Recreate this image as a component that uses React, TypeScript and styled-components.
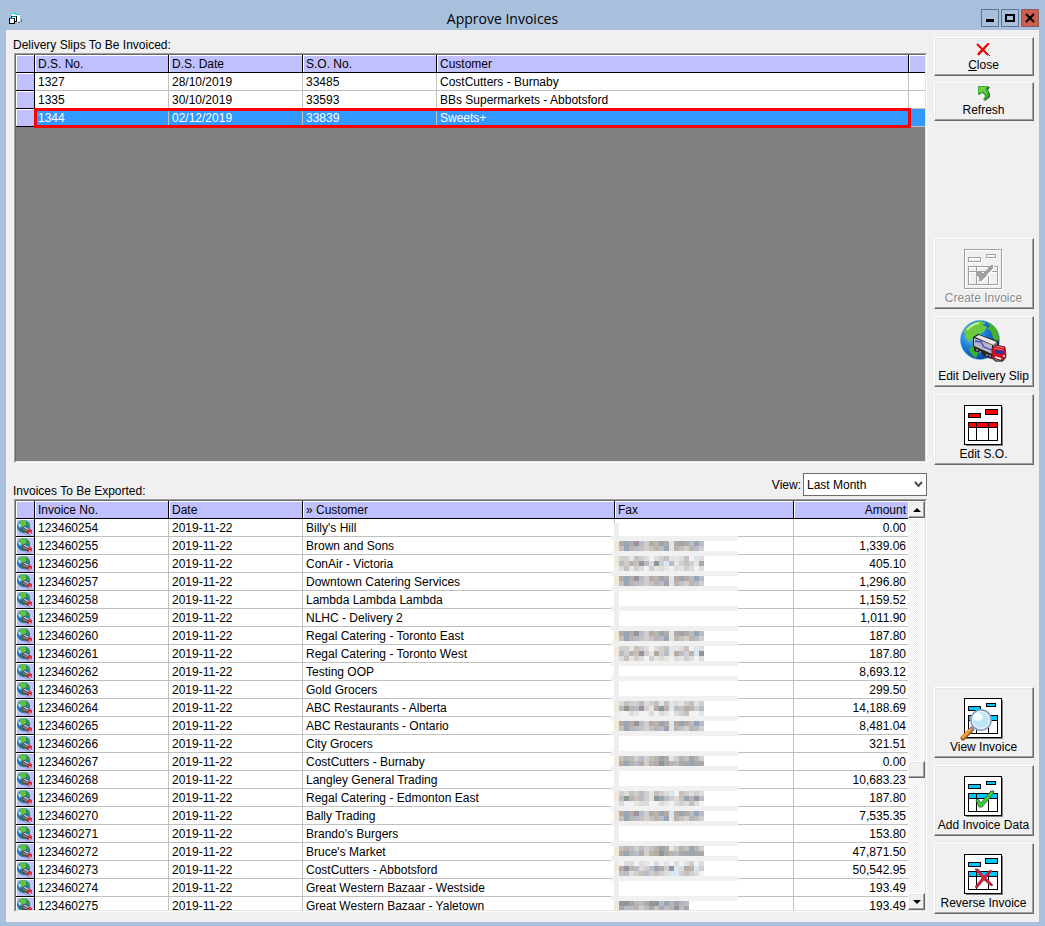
import React from 'react';
import styled, { createGlobalStyle, css } from 'styled-components';

const GlobalStyle = createGlobalStyle`
  *, *::before, *::after { box-sizing: border-box; }
  body {
    margin: 0;
    background: #a8c0dc;
    color: #000;
    font-family: "Liberation Sans", Arial, sans-serif;
    font-size: 12px;
  }
  button, select { font: inherit; color: inherit; }
`;

const Window = styled.div`
  display: flex;
  flex-direction: column;
  min-height: 100vh;
  padding: 0 6px 4px;
`;

const TitleBar = styled.header`
  display: flex;
  align-items: center;
  height: 30px;
  padding: 6px 0 0 2px;
`;

const Title = styled.h1`
  flex: 1;
  margin: 0;
  padding-top: 2px;
  font-family: "Open Sans", "Noto Sans", sans-serif;
  font-size: 14px;
  font-weight: 400;
  line-height: 20px;
  text-align: center;
`;

const WindowControls = styled.div`
  display: flex;
  gap: 2px;
`;

const ControlButton = styled.button<{ $danger?: boolean }>`
  display: flex;
  align-items: center;
  justify-content: center;
  width: 18px;
  height: 18px;
  padding: 0;
  border: 1px solid ${(p) => (p.$danger ? '#8a5a5c' : '#5f738c')};
  background: ${(p) => (p.$danger ? '#cd604c' : '#a8c0dc')};
`;

const Client = styled.div`
  display: flex;
  flex: 1;
  gap: 7px;
  padding: 0 5px 0 7px;
  background: #f0f0f0;
`;

const Main = styled.main`
  display: flex;
  flex: 1;
  flex-direction: column;
  min-width: 0;
  padding-bottom: 10px;
`;

const SectionBar = styled.div<{ $tall?: boolean }>`
  display: flex;
  align-items: flex-end;
  justify-content: space-between;
  height: ${(p) => (p.$tall ? 36 : 23)}px;
  ${(p) => p.$tall && css`padding-bottom: 3px;`}
`;

const SectionTitle = styled.h2<{ $low?: boolean }>`
  margin: 0;
  font-size: 12px;
  font-weight: 400;
  line-height: 16px;
  ${(p) => p.$low && css`margin-bottom: -3px;`}
`;

const ViewField = styled.label`
  display: flex;
  align-items: center;
  gap: 2px;
`;

const SelectWrap = styled.span`
  position: relative;
  display: block;

  svg {
    position: absolute;
    top: 8px;
    right: 4px;
    pointer-events: none;
  }
`;

const ViewSelect = styled.select`
  display: block;
  width: 124px;
  height: 23px;
  padding: 0 16px 0 3px;
  border: 1px solid #6d6d6d;
  border-radius: 0;
  background: #fff;
  appearance: none;
`;

const GridFrame = styled.div<{ $share: number; $fill: string }>`
  position: relative;
  display: flex;
  flex: ${(p) => p.$share} 1 0;
  min-height: 200px;
  margin-left: 1px;
  overflow: hidden;
  border: 1px solid;
  border-color: #a0a0a0 #fff #fff #a0a0a0;
  background: ${(p) => p.$fill};

  &::after {
    content: '';
    position: absolute;
    inset: 0;
    border: 1px solid;
    border-color: #696969 #e3e3e3 #e3e3e3 #696969;
    pointer-events: none;
  }
`;

const GridView = styled.div`
  position: relative;
  flex: 1 1 0;
  min-width: 0;
  height: 0;
  min-height: 100%;
  margin: 1px 0 0 1px;
  overflow: hidden;
`;

const Grid = styled.table`
  width: 100%;
  border-spacing: 0;
  border-collapse: separate;
  table-layout: fixed;
`;

const Col = styled.col<{ $w?: number }>`
  ${(p) => p.$w && css`width: ${p.$w}px;`}
`;

const HeadCell = styled.th<{ $right?: boolean; $last?: boolean }>`
  height: 18px;
  padding: 0 2px 0 3px;
  border-right: ${(p) => (p.$last ? 0 : 1)}px solid #000;
  border-bottom: 1px solid #000;
  background: #c0c0ff;
  box-shadow: inset 1px 1px #fff;
  font-weight: 400;
  line-height: 16px;
  text-align: ${(p) => (p.$right ? 'right' : 'left')};
  white-space: nowrap;
`;

const Cell = styled.td<{ $right?: boolean; $last?: boolean }>`
  height: 18px;
  padding: 0 ${(p) => (p.$right ? 2 : 3)}px 0 3px;
  border-right: ${(p) => (p.$last ? 0 : 1)}px solid #c0c0c0;
  border-bottom: 1px solid #c0c0c0;
  line-height: 16px;
  text-align: ${(p) => (p.$right ? 'right' : 'left')};
  white-space: nowrap;
`;

const RowHead = styled.td`
  height: 18px;
  padding: 0;
  border-right: 1px solid #000;
  border-bottom: 1px solid #000;
  background: #c0c0ff;
  box-shadow: inset 1px 1px #fff;
  line-height: 0;
`;

const Row = styled.tr<{ $selected?: boolean }>`
  background: ${(p) => (p.$selected ? '#3399ff' : '#fff')};
  color: ${(p) => (p.$selected ? '#fff' : '#000')};
`;

const Highlight = styled.div`
  position: absolute;
  top: 53px;
  left: 18px;
  right: 15px;
  height: 20px;
  border: 3px solid #f80000;
  pointer-events: none;
`;

const Marker = styled.small`
  font-size: 12px;
`;

const Censor = styled.svg`
  position: absolute;
  top: 20px;
  right: 170px;
`;

const ScrollBar = styled.div`
  display: flex;
  flex-direction: column;
  width: 17px;
  margin: 1px 1px 1px 0;
  background: repeating-conic-gradient(#fff 0 25%, #ececec 0 50%) 0 0 / 2px 2px;
`;

const raised = css`
  border: 1px solid;
  border-color: #fff #696969 #696969 #fff;
  background: #f0f0f0;
  box-shadow: inset -1px -1px #a0a0a0, inset 1px 1px #e8e8e8;
`;

const ScrollPiece = styled.button`
  ${raised}
  display: flex;
  align-items: center;
  justify-content: center;
  width: 17px;
  height: 17px;
  padding: 0;
`;

const Space = styled.div<{ $grow: number }>`
  flex: ${(p) => p.$grow} 1 0;
`;

const Sidebar = styled.nav`
  display: flex;
  flex-direction: column;
  gap: 7px;
  width: 100px;
  padding: 7px 0 8px;
`;

const ToolButton = styled.button<{ $small?: boolean }>`
  ${raised}
  display: flex;
  flex-direction: column;
  align-items: center;
  justify-content: space-between;
  flex: none;
  width: 100%;
  height: ${(p) => (p.$small ? 39 : 71)}px;
  padding: ${(p) => (p.$small ? '4px 1px 2px 0' : '2px 1px 2px 0')};
  ${(p) => p.$small && css`margin-bottom: -1px;`}
  line-height: 16px;
  white-space: nowrap;

  &:disabled {
    color: #8a8a8a;
    text-shadow: 1px 1px #fff;
  }
`;

const IconBox = styled.span<{ $small?: boolean }>`
  display: flex;
  align-items: flex-end;
  justify-content: center;
  height: ${(p) => (p.$small ? 14 : 51)}px;
`;

const Filler = styled.div<{ $h?: number }>`
  ${(p) => (p.$h ? css`flex: 0 0 ${p.$h}px;` : css`flex: 1;`)}
`;

function DocShapes({ fill, line, wide }: { fill: string; line: string; wide?: boolean }) {
  return (
    <g fill={fill} stroke={line} shapeRendering="crispEdges">
      <rect x=".5" y=".5" width="37" height="39" fill={line === '#000' ? '#fff' : 'none'} />
      {wide ? <rect x="21.5" y="4.5" width="12" height="5" /> : <rect x="22.5" y="5.5" width="9" height="3" />}
      <rect x="4.5" y="8.5" width="12" height="4" />
      <rect x="4.5" y="17.5" width="29" height="18" fill={line === '#000' ? '#fff' : 'none'} />
      <rect x="4.5" y="17.5" width="29" height="5" />
      <path d="M12.5 17v18M24.5 17v18" fill="none" />
    </g>
  );
}

function DocIcon({ kind }: { kind: 'create' | 'so' | 'view' | 'add' | 'reverse' }) {
  if (kind === 'create') {
    return (
      <svg width="40" height="41" viewBox="0 0 40 41">
        <g transform="translate(1 1)"><DocShapes fill="none" line="#fff" /></g>
        <DocShapes fill="none" line="#a0a0a0" />
        <path d="M12 22h5l2 3 8-9h2v3L18 32h-3v-3l-3-3z" fill="#fff" transform="translate(1 1)" />
        <path d="M12 22h5l2 3 8-9h2v3L18 32h-3v-3l-3-3z" fill="#a0a0a0" shapeRendering="crispEdges" />
      </svg>
    );
  }
  return (
    <svg width="40" height="41" viewBox="0 0 40 41" overflow="visible">
      <path d="M2 40.5h36.500V2" fill="none" stroke="#808080" shapeRendering="crispEdges" />
      <DocShapes fill={kind === 'so' ? '#f00' : '#00c8ff'} line="#000" wide={kind === 'so' || kind === 'reverse'} />
      {kind === 'view' && (
        <g>
          <path d="M-1 40l9-9" stroke="#a05a1c" strokeWidth="5" strokeLinecap="round" />
          <path d="M-1 39l8-8" stroke="#f2a044" strokeWidth="3" strokeLinecap="round" />
          <path d="M7 32l3-3" stroke="#888fa8" strokeWidth="3" />
          <circle cx="17" cy="22" r="10" fill="#bfe4f8" stroke="#8ba2c4" strokeWidth="2" />
          <circle cx="17" cy="22" r="8.5" fill="none" stroke="#e8f5fc" strokeWidth="1.5" />
          <ellipse cx="14" cy="19" rx="5" ry="4" fill="#f2fbff" />
        </g>
      )}
      {kind === 'add' && (
        <path d="M12 24l2-1 3 4L27 15h3l-1 3-11 13h-3z" fill="#38d038" stroke="#3c7040" />
      )}
      {kind === 'reverse' && (
        <path d="M11 15l3 0 6 7 6-6 2 1-6 7 7 7-2 1-7-6-7 8-2-1 7-9z" fill="#d0203c" stroke="#8c3048" strokeWidth=".7" />
      )}
    </svg>
  );
}

const TruckIcon = () => (
  <svg width="47" height="48" viewBox="0 0 47 48">
    <defs>
      <radialGradient id="ocean" cx=".3" cy=".35" r=".75">
        <stop offset="0" stopColor="#6cc8f8" />
        <stop offset=".45" stopColor="#1c80dc" />
        <stop offset="1" stopColor="#043c90" />
      </radialGradient>
    </defs>
    <circle cx="20" cy="20" r="19.5" fill="url(#ocean)" stroke="#60b0e8" strokeWidth=".6" />
    <path d="M4 11Q10 3 20 1l6 2-4 2 5 2-3 5-5 2-2 4-5 0-2 5-3-4-2-2 1-4-3-1z" fill="#6cc83c" />
    <path d="M27 2q8 3 11 10l1 8-3 2-3-4-2-7-4-2 3-3z" fill="#48b028" />
    <path d="M11 26l5-1 4 4-2 5-2 4-4-3-3-5z" fill="#38b034" />
    <path d="M7 10q5-6 12-7" stroke="#c0f090" strokeWidth="2" fill="none" />
    <path d="M13 17l5-3 20 7 1 5-6 9-3 1-17-9z" fill="#202028" />
    <path d="M15 17l4-2 18 7-4 3z" fill="#e4e4e4" />
    <path d="M14 18l18 7v9l-18-8z" fill="#b8b8bc" />
    <path d="M33 25l4-3v5l-4 6z" fill="#8c8c94" />
    <path d="M15 21l6 1 3 5 8 3" fill="none" stroke="#3c3cf0" strokeWidth="1.300" />
    <path d="M14 27l18 8v4l-4-1-2-2h-2l-3-3-7-2z" fill="#282830" />
    <path d="M17 29v2M20 31v2M27 34v2M30 35v2" stroke="#d0d0d0" strokeWidth="1" />
    <path d="M32 28l4-3 9 2 1 9-3 5-11-3z" fill="#d01424" stroke="#401018" strokeWidth=".8" />
    <path d="M34 28l9 2M36 26l8 2" stroke="#f87070" strokeWidth="1" />
    <path d="M35 30l9 1v3l-9-1z" fill="#2434b0" />
    <path d="M35 37l6 2M44 35v2" stroke="#fff" strokeWidth="1.500" />
    <path d="M32 38l4 3h6l4-4" stroke="#404040" strokeWidth="1.500" fill="none" />
  </svg>
);

const RowIcon = () => (
  <svg width="17" height="17" viewBox="0 0 17 17">
    <circle cx="7.500" cy="7.500" r="6.500" fill="#1c70c0" />
    <path d="M4 2q3-2 6 0l1 3-3 3-2 1-3-2z" fill="#60c048" />
    <path d="M10 2q3 1 4 5l-2 2-2-4z" fill="#309838" />
    <path d="M2 4q0 3 2 5l1-3z" fill="#b0e4f8" />
    <path d="M3 10l2 3 3 1-1-3z" fill="#208850" />
    <path d="M6 8l2-1 6 3v3l-2 2-6-3z" fill="#505058" />
    <path d="M7 8h2l4 2-1 1z" fill="#d4d4d8" />
    <path d="M7 10l4 2" stroke="#a0a0b0" />
    <path d="M12 11l2-1 2 1v3l-2 1-2-1z" fill="#d83040" />
    <path d="M13 14h2" stroke="#f0c0c0" />
    <path d="M7 14l4 2h4" stroke="#9098c0" fill="none" />
  </svg>
);

const AppIcon = () => (
  <svg width="16" height="14" viewBox="0 0 16 14" shapeRendering="crispEdges">
    <path d="M4 3h5v1h3v6l-3 1H6z" fill="#fff" />
    <path d="M4 2.500h4M7 3.500h5" stroke="#00e0e0" />
    <path d="M13.500 8v3M10 11.500h2" stroke="#707070" />
    <path d="M3.500 5.500h5v5h-5z" fill="#fff" stroke="#000" />
    <path d="M1.500 7.500h5v5h-5z" fill="#fff" stroke="#000" />
    <path d="M2 7.500h4M4 5.500h4" stroke="#008888" />
  </svg>
);

const CloseIcon = () => (
  <svg width="15" height="13" viewBox="0 0 15 13">
    <path d="M2 2l12 11M12 2L3 12" stroke="#501010" strokeWidth="1" fill="none" />
    <path d="M1 1l11 11" stroke="#f80000" strokeWidth="2" fill="none" />
    <path d="M13 0L3 10l-1 2" stroke="#f80000" strokeWidth="2" fill="none" />
  </svg>
);

const RefreshIcon = () => (
  <svg width="12" height="15" viewBox="0 0 12 15">
    <path d="M1 1h11L10 4l2 4v3l-5 4-1-1 2-3-2-3-2-1-3 2z" fill="#2c5830" />
    <path d="M0 0h11L9 3l2 5v2l-4 4H5l2-4-2-3H3L0 9z" fill="#3cac38" />
    <path d="M1 1h8L7 3l2 4-1 1-3-3-4 2z" fill="#70d048" />
  </svg>
);

const PALETTE: Record<string, string> = {
  a: '#b5aaa4', b: '#97a6b2', c: '#b9b4ad', d: '#9a929c', e: '#b9bcc6', f: '#cfcfd0',
  g: '#dbe7f0', h: '#c8c0bc', i: '#dcdcdc', j: '#8e9696', k: '#e8e4de', l: '#f2f2f4', n: '#a8a8a8',
};
const ORDINARY = ['abadefacbagabaebe', 'hbcehfhcebkchfcef'];
const LATER = ['hcefefhcbakfchbcf', 'abceafcajncennbnn'];
const TALL = ['ffkhfilifhgkihlgi', 'efchdfkafekaefcgj', 'ihkfilfkikligfili'];
const FAXES: [number, string[]][] = [
  [1, ORDINARY], [2, ['ffkhfilifhgkihlgi', 'efchdeijfgekfhfkn', 'ihkfilfkikligfili']], [3, ORDINARY],
  [6, ORDINARY], [7, TALL], [10, ['ihffeifhghgikfhgf', 'ejcedfkajcgehacfe', 'lliklliliklifhllg']], [11, ORDINARY], [13, LATER],
  [15, ['fihfefkhfiglhfifi', 'ejchefkjbefihbcde', 'illkiilliklifihil']], [16, ORDINARY], [18, LATER],
  [19, ['liiliklilglilgfli', 'adceifebafdgiacgf', 'heifhefhfiggfhfil']], [21, ['djbceadjebcbce', 'neecfenhnecden']],
];
/* The mosaic snaps to five-pixel blocks measured from its own top edge. */
const stripTop = (line: number) => Math.floor((15 + 18 * line) / 5) * 5;

const FaxMosaic = () => (
  <Censor width="127" height="395" shapeRendering="crispEdges" aria-hidden="true">
    {Array.from({ length: 22 }, (_, i) => (
      <rect key={i} x="0" y={stripTop(i)} width="127" height="5" fill="#f1f1f1" />
    ))}
    {/* White patches hide the row rules that the strips leave uncovered. */}
    <rect x="3" y="2" width="5" height="393" fill="#eeeeee" />
    {FAXES.map(([row, lines]) => {
      const top = stripTop(row - 1) + 5;
      return (
        <g key={row}>
          <rect x="3" y={top} width="5" height="10" fill="#efe9dc" />
          {lines.flatMap((line, r) =>
            line.split('').map((c, n) => (
              <rect key={`${r}-${n}`} x={8 + n * 5} y={top + r * 5} width="5" height="5" fill={PALETTE[c]} />
            )),
          )}
        </g>
      );
    })}
  </Censor>
);

const SLIPS = [
  ['1327', '28/10/2019', '33485', 'CostCutters - Burnaby'],
  ['1335', '30/10/2019', '33593', 'BBs Supermarkets - Abbotsford'],
  ['1344', '02/12/2019', '33839', 'Sweets+'],
];

const INVOICES: [string, string][] = [
  ["Billy's Hill", '0.00'],
  ['Brown and Sons', '1,339.06'],
  ['ConAir - Victoria', '405.10'],
  ['Downtown Catering Services', '1,296.80'],
  ['Lambda Lambda Lambda', '1,159.52'],
  ['NLHC - Delivery 2', '1,011.90'],
  ['Regal Catering - Toronto East', '187.80'],
  ['Regal Catering - Toronto West', '187.80'],
  ['Testing OOP', '8,693.12'],
  ['Gold Grocers', '299.50'],
  ['ABC Restaurants - Alberta', '14,188.69'],
  ['ABC Restaurants - Ontario', '8,481.04'],
  ['City Grocers', '321.51'],
  ['CostCutters - Burnaby', '0.00'],
  ['Langley General Trading', '10,683.23'],
  ['Regal Catering - Edmonton East', '187.80'],
  ['Bally Trading', '7,535.35'],
  ["Brando's Burgers", '153.80'],
  ["Bruce's Market", '47,871.50'],
  ['CostCutters - Abbotsford', '50,542.95'],
  ['Great Western Bazaar - Westside', '193.49'],
  ['Great Western Bazaar - Yaletown', '193.49'],
];

export default function App() {
  return (
    <>
      <GlobalStyle />
      <Window>
        <TitleBar>
          <AppIcon />
          <Title>Approve Invoices</Title>
          <WindowControls>
            <ControlButton aria-label="Minimize">
              <svg width="10" height="10"><path d="M1 7.500h8" stroke="#000" strokeWidth="3" /></svg>
            </ControlButton>
            <ControlButton aria-label="Maximize">
              <svg width="10" height="10"><path d="M1 2h8v6H1z" fill="none" stroke="#000" strokeWidth="2" /></svg>
            </ControlButton>
            <ControlButton $danger aria-label="Close window">
              <svg width="10" height="10"><path d="M1 1l8 8M9 1L1 9" stroke="#000" strokeWidth="2" /></svg>
            </ControlButton>
          </WindowControls>
        </TitleBar>
        <Client>
          <Main>
            <SectionBar>
              <SectionTitle>Delivery Slips To Be Invoiced:</SectionTitle>
            </SectionBar>
            <GridFrame $share={410} $fill="#808080">
              <GridView>
                <Grid aria-label="Delivery slips to be invoiced">
                  <colgroup>
                    <Col $w={19} /><Col $w={134} /><Col $w={134} /><Col $w={134} /><Col /><Col $w={17} />
                  </colgroup>
                  <thead>
                    <tr>
                      <HeadCell />
                      {['D.S. No.', 'D.S. Date', 'S.O. No.', 'Customer'].map((h) => (
                        <HeadCell key={h}>{h}</HeadCell>
                      ))}
                      <HeadCell $last />
                    </tr>
                  </thead>
                  <tbody>
                    {SLIPS.map((slip, i) => (
                      <Row key={slip[0]} $selected={i === 2}>
                        <RowHead />
                        {slip.map((value) => <Cell key={value}>{value}</Cell>)}
                        <Cell $last />
                      </Row>
                    ))}
                  </tbody>
                </Grid>
                <Highlight />
              </GridView>
            </GridFrame>
            <SectionBar $tall>
              <SectionTitle $low>Invoices To Be Exported:</SectionTitle>
              <ViewField>
                View:
                <SelectWrap>
                  <ViewSelect defaultValue="Last Month">
                    <option>Last Month</option>
                  </ViewSelect>
                  <svg width="9" height="8"><path d="M1 1l3.500 4L8 1" fill="none" stroke="#505050" strokeWidth="2" /></svg>
                </SelectWrap>
              </ViewField>
            </SectionBar>
            <GridFrame $share={413} $fill="#fff">
              <GridView>
                <Grid aria-label="Invoices to be exported">
                  <colgroup>
                    <Col $w={19} /><Col $w={134} /><Col $w={134} /><Col /><Col $w={179} /><Col $w={114} />
                  </colgroup>
                  <thead>
                    <tr>
                      <HeadCell />
                      <HeadCell>Invoice No.</HeadCell>
                      <HeadCell>Date</HeadCell>
                      <HeadCell><Marker>»</Marker> Customer</HeadCell>
                      <HeadCell>Fax</HeadCell>
                      <HeadCell $right $last>Amount</HeadCell>
                    </tr>
                  </thead>
                  <tbody>
                    {INVOICES.map(([customer, amount], i) => (
                      <Row key={i}>
                        <RowHead><RowIcon /></RowHead>
                        <Cell>{123460254 + i}</Cell>
                        <Cell>2019-11-22</Cell>
                        <Cell>{customer}</Cell>
                        <Cell />
                        <Cell $right $last>{amount}</Cell>
                      </Row>
                    ))}
                  </tbody>
                </Grid>
                <FaxMosaic />
              </GridView>
              <ScrollBar>
                <ScrollPiece aria-label="Scroll up">
                  <svg width="8" height="4"><path d="M0 4l4-4 4 4z" /></svg>
                </ScrollPiece>
                <Space $grow={244} />
                <ScrollPiece aria-label="Scroll position" />
                <Space $grow={115} />
                <ScrollPiece aria-label="Scroll down">
                  <svg width="8" height="4"><path d="M0 0l4 4 4-4z" /></svg>
                </ScrollPiece>
              </ScrollBar>
            </GridFrame>
          </Main>
          <Sidebar aria-label="Invoice actions">
            <ToolButton $small>
              <IconBox $small><CloseIcon /></IconBox>
              <span><u>C</u>lose</span>
            </ToolButton>
            <ToolButton $small>
              <IconBox $small><RefreshIcon /></IconBox>
              <span>Refresh</span>
            </ToolButton>
            <Filler $h={104} />
            <ToolButton disabled>
              <IconBox><DocIcon kind="create" /></IconBox>
              <span>Create Invoice</span>
            </ToolButton>
            <ToolButton>
              <IconBox><TruckIcon /></IconBox>
              <span>Edit Delivery Slip</span>
            </ToolButton>
            <ToolButton>
              <IconBox><DocIcon kind="so" /></IconBox>
              <span>Edit S.O.</span>
            </ToolButton>
            <Filler />
            <ToolButton>
              <IconBox><DocIcon kind="view" /></IconBox>
              <span>View Invoice</span>
            </ToolButton>
            <ToolButton>
              <IconBox><DocIcon kind="add" /></IconBox>
              <span>Add Invoice Data</span>
            </ToolButton>
            <ToolButton>
              <IconBox><DocIcon kind="reverse" /></IconBox>
              <span>Reverse Invoice</span>
            </ToolButton>
          </Sidebar>
        </Client>
      </Window>
    </>
  );
}
